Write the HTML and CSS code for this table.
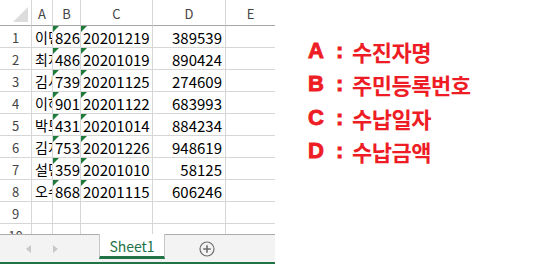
FILE: index.html
```html
<!DOCTYPE html>
<html lang="ko">
<head>
<meta charset="utf-8">
<link rel="stylesheet" href="styles.css">
</head>
<body>
<div class="page">
  <div class="workbook">
    <div class="sheet">
      <div class="grid">
        <div class="hd corner"><span class="tri"></span></div>
        <div class="hd col">A</div>
        <div class="hd col">B</div>
        <div class="hd col">C</div>
        <div class="hd col">D</div>
        <div class="hd col last">E</div>

        <div class="rn">1</div><div class="c nm">이민수</div><div class="c t">8261234567890</div><div class="c t">20201219</div><div class="c r">389539</div><div class="c last"></div>
        <div class="rn">2</div><div class="c nm">최지현</div><div class="c t">4865123456789</div><div class="c t">20201019</div><div class="c r">890424</div><div class="c last"></div>
        <div class="rn">3</div><div class="c nm">김서준</div><div class="c t">7390123456789</div><div class="c t">20201125</div><div class="c r">274609</div><div class="c last"></div>
        <div class="rn">4</div><div class="c nm">이하은</div><div class="c t">9015123456789</div><div class="c t">20201122</div><div class="c r">683993</div><div class="c last"></div>
        <div class="rn">5</div><div class="c nm">박도윤</div><div class="c t">4312123456789</div><div class="c t">20201014</div><div class="c r">884234</div><div class="c last"></div>
        <div class="rn">6</div><div class="c nm">김지우</div><div class="c t">7537123456789</div><div class="c t">20201226</div><div class="c r">948619</div><div class="c last"></div>
        <div class="rn">7</div><div class="c nm">설민준</div><div class="c t">3594123456789</div><div class="c t">20201010</div><div class="c r">58125</div><div class="c last"></div>
        <div class="rn">8</div><div class="c nm">오수아</div><div class="c t">8684123456789</div><div class="c t">20201115</div><div class="c r">606246</div><div class="c last"></div>
        <div class="rn">9</div><div class="c"></div><div class="c"></div><div class="c"></div><div class="c"></div><div class="c last"></div>
        <div class="rn">10</div><div class="c"></div><div class="c"></div><div class="c"></div><div class="c"></div><div class="c last"></div>
      </div>
    </div>
    <div class="tabbar">
      <div class="nav">
        <span class="arrow left"></span>
        <span class="arrow right"></span>
      </div>
      <div class="tab">Sheet1</div>
      <div class="add">
        <svg width="16" height="16" viewBox="0 0 16 16">
          <circle cx="8" cy="8" r="7" fill="none" stroke="#6f6f6f" stroke-width="1.2"/>
          <path d="M8 4.2v7.6M4.2 8h7.6" stroke="#6f6f6f" stroke-width="1.6"/>
        </svg>
      </div>
    </div>
    <div class="greenbar"></div>
  </div>
  <div class="legend">
    <div class="item"><span class="key">A</span><span class="colon">:</span><span class="name">수진자명</span></div>
    <div class="item"><span class="key">B</span><span class="colon">:</span><span class="name">주민등록번호</span></div>
    <div class="item"><span class="key">C</span><span class="colon">:</span><span class="name">수납일자</span></div>
    <div class="item"><span class="key">D</span><span class="colon">:</span><span class="name">수납금액</span></div>
  </div>
</div>
</body>
</html>
```
FILE: styles.css
```css
* { box-sizing: border-box; }
html, body { margin: 0; padding: 0; background: #fff; }
body { width: 533px; height: 264px; overflow: hidden; }

.page {
  display: flex;
  height: 264px;
}

.workbook {
  width: 275px;
  height: 264px;
  display: flex;
  flex-direction: column;
}

.sheet {
  height: 234px;
  overflow: hidden;
}

.grid {
  display: grid;
  grid-template-columns: 32px 21px 28px 72px 73px 49px;
  grid-template-rows: 26px repeat(10, 22px);
  font-family: "Noto Sans CJK KR", "Noto Sans", sans-serif;
}

.hd {
  border-bottom: 1px solid #a6a6a6;
  border-right: 1px solid #d6d6d6;
  color: #444;
  font-size: 13px;
  display: flex;
  align-items: center;
  justify-content: center;
  padding-top: 1px;
}
.hd.last { border-right: none; }

.corner { position: relative; }
.tri {
  position: absolute;
  right: 3px;
  bottom: 3px;
  width: 15px;
  height: 15px;
  background: #dcdcdc;
  clip-path: polygon(100% 0, 100% 100%, 0 100%);
}

.rn {
  border-right: 1px solid #d6d6d6;
  border-bottom: 1px solid #d6d6d6;
  color: #444;
  font-size: 13px;
  display: flex;
  align-items: center;
  justify-content: center;
  padding-top: 2px;
}

.c {
  position: relative;
  border-right: 1px solid #d6d6d6;
  border-bottom: 1px solid #d6d6d6;
  font-size: 15px;
  line-height: 21px;
  color: #000;
  white-space: nowrap;
  overflow: hidden;
  padding-left: 2px;
  padding-top: 1px;
}
.c.nm { font-size: 14px; padding-left: 3px; }
.c.last { border-right: none; }
.c.r { text-align: right; padding-right: 3px; }
.c.t::before {
  content: "";
  position: absolute;
  left: 0;
  top: 0;
  width: 6px;
  height: 6px;
  background: #1e7b3a;
  clip-path: polygon(0 0, 100% 0, 0 100%);
}

.tabbar {
  height: 28px;
  background: #f3f3f3;
  border-top: 1px solid #ababab;
  display: flex;
  align-items: stretch;
  font-family: "Noto Sans CJK KR", "Noto Sans", sans-serif;
}
.nav {
  width: 99px;
  display: flex;
  align-items: center;
  padding-left: 26px;
  gap: 22px;
}
.arrow {
  width: 0;
  height: 0;
  border-top: 4px solid transparent;
  border-bottom: 4px solid transparent;
}
.arrow.left { border-right: 5px solid #c8c8c8; }
.arrow.right { border-left: 5px solid #c8c8c8; }

.tab {
  width: 66px;
  margin-top: -1px;
  margin-bottom: 3px;
  background: #fff;
  border-left: 1px solid #c6c6c6;
  border-right: 1px solid #c6c6c6;
  border-bottom: 3px solid #217346;
  color: #217346;
  font-size: 14px;
  display: flex;
  align-items: center;
  justify-content: center;
  padding-top: 1px;
}
.add {
  width: 84px;
  display: flex;
  align-items: center;
  justify-content: center;
}

.greenbar {
  height: 2px;
  background: #217346;
}

.legend {
  padding-left: 33px;
  padding-top: 34px;
  display: flex;
  flex-direction: column;
  color: #ee1c25;
  font-weight: bold;
  font-size: 22px;
}
.item {
  height: 33.5px;
  display: flex;
  align-items: center;
  white-space: nowrap;
}
.key {
  font-family: "Liberation Sans", Arial, sans-serif;
  -webkit-text-stroke: 0.9px #ee1c25;
  width: 28px;
}
.colon {
  font-family: "Liberation Sans", Arial, sans-serif;
  -webkit-text-stroke: 0.9px #ee1c25;
  width: 16px;
}
.name {
  font-family: "Noto Sans CJK KR", sans-serif;
  letter-spacing: -0.5px;
}
```
